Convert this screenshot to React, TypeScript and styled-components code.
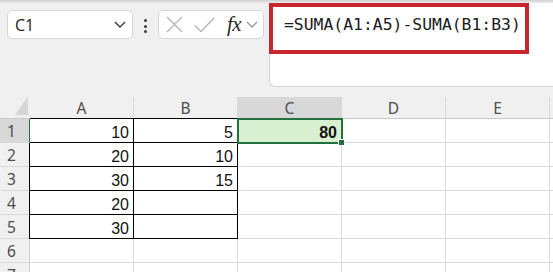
import styled, { createGlobalStyle } from 'styled-components';

const GREEN = '#22703f';
const GRID = '#dadada';

const GlobalStyle = createGlobalStyle`
  html, body {
    margin: 0;
    padding: 0;
    background: #f0f0f0;
    overflow: hidden;
  }
  #root {
    width: 553px;
    height: 272px;
    overflow: hidden;
  }
`;

const rows: (number | string)[][] = [
  [10, 5, 80],
  [20, 10],
  [30, 15],
  [20, ''],
  [30, ''],
  [],
  [],
];

const columns = ['A', 'B', 'C', 'D', 'E', ''];

const Chevron = ({ color }: { color: string }) => (
  <svg width="12" height="7" viewBox="0 0 12 7">
    <path d="M1 1l5 5 5-5" fill="none" stroke={color} strokeWidth="1.4" />
  </svg>
);

export default function App() {
  return (
    <Page>
      <GlobalStyle />
      <TopShade />
      <ToolRow>
        <NameBox>
          <span>C1</span>
          <Chevron color="#3a3a3a" />
        </NameBox>
        <Dots>
          <i />
          <i />
          <i />
        </Dots>
        <FxBox>
          <svg width="17" height="17" viewBox="0 0 17 17">
            <path d="M1 1l15 15M16 1L1 16" stroke="#b4b4b4" strokeWidth="1.3" />
          </svg>
          <svg width="21" height="16" viewBox="0 0 21 16">
            <path d="M1 8.5l6 6L20 1" fill="none" stroke="#b4b4b4" strokeWidth="1.3" />
          </svg>
          <FxLabel>fx</FxLabel>
          <Chevron color="#9a9a9a" />
        </FxBox>
        <FormulaBar>
          <Highlight>=SUMA(A1:A5)-SUMA(B1:B3)</Highlight>
        </FormulaBar>
      </ToolRow>
      <Sheet>
        <Corner>
          <svg width="13" height="19" viewBox="0 0 13 19">
            <path d="M13 0v19H0z" fill="#d6d6d6" />
          </svg>
        </Corner>
        {columns.map((c) => (
          <ColHead key={c || 'F'} $active={c === 'C'}>
            {c}
          </ColHead>
        ))}
        {rows.map((row, r) => (
          <Row key={r} row={row} index={r} />
        ))}
      </Sheet>
    </Page>
  );
}

const Row = ({ row, index }: { row: (number | string)[]; index: number }) => (
  <>
    <RowHead $active={index === 0}>{index + 1}</RowHead>
    {columns.map((_, c) => {
      const boxed = index < 5 && c < 2;
      const selected = index === 0 && c === 2;
      return (
        <Cell
          key={c}
          $boxed={boxed}
          $top={boxed && index === 0}
          $left={boxed && c === 0 && index > 0}
          $selected={selected}
        >
          {row[c]}
          {selected && <Handle />}
        </Cell>
      );
    })}
  </>
);

const Page = styled.div`
  display: flex;
  flex-direction: column;
  height: 272px;
  font-family: 'Liberation Sans', Arial, sans-serif;
`;

const TopShade = styled.div`
  height: 3px;
  background: linear-gradient(#cfcfcf, #ebebeb);
`;

const ToolRow = styled.div`
  display: flex;
  align-items: flex-start;
  height: 94px;
  padding-left: 7px;
`;

const NameBox = styled.div`
  box-sizing: border-box;
  display: flex;
  align-items: center;
  justify-content: space-between;
  width: 126px;
  height: 29px;
  margin-top: 7px;
  padding: 0 6px 0 7px;
  background: #fff;
  border: 1px solid #d6d6d6;
  border-radius: 5px;
  font-family: 'Open Sans', sans-serif;
  font-size: 16px;
  color: #222;
`;

const Dots = styled.div`
  display: flex;
  flex-direction: column;
  gap: 2.5px;
  margin: 16px 11px 0 11px;

  i {
    width: 3px;
    height: 3px;
    border-radius: 50%;
    background: #3c3c3c;
  }
`;

const FxBox = styled.div`
  box-sizing: border-box;
  display: flex;
  align-items: center;
  width: 106px;
  height: 29px;
  margin-top: 7px;
  padding: 0 0 0 7px;
  gap: 11px;
  background: #fff;
  border: 1px solid #d6d6d6;
  border-radius: 5px;
`;

const FxLabel = styled.span`
  margin-left: 1px;
  margin-right: -6px;
  font-family: 'Liberation Serif', serif;
  font-style: italic;
  font-size: 21px;
  color: #2a2a2a;
  letter-spacing: -0.5px;
`;

const FormulaBar = styled.div`
  flex: 1;
  height: 83px;
  margin-left: 5px;
  background: #fff;
  border-left: 1px solid #d4d4d4;
  border-bottom: 1px solid #d4d4d4;
  border-bottom-left-radius: 6px;
`;

const Highlight = styled.div`
  box-sizing: border-box;
  width: 260px;
  height: 51px;
  margin-left: -1px;
  padding: 8px 0 0 11px;
  border: 4px solid #c8262f;
  font-family: 'DejaVu Sans Mono', monospace;
  font-size: 16.4px;
  line-height: 20px;
  color: #1a1a1a;
  white-space: nowrap;
`;

const Sheet = styled.div`
  flex: 1;
  display: grid;
  grid-template-columns: 30px repeat(6, 104px);
  grid-template-rows: 22px;
  grid-auto-rows: 24px;
  overflow: hidden;
  background: #fff;
`;

const Corner = styled.div`
  display: flex;
  align-items: flex-end;
  justify-content: flex-end;
  padding: 0 2px 3px 0;
  background: #f0f0f0;
  border-bottom: 1px solid #c9c9c9;
`;

const ColHead = styled.div<{ $active?: boolean }>`
  box-sizing: border-box;
  display: flex;
  align-items: center;
  justify-content: center;
  background: ${(p) => (p.$active ? '#d8d8d8' : '#f0f0f0')};
  border-right: 1px solid #d9d9d9;
  border-bottom: 1px solid ${(p) => (p.$active ? GREEN : '#c9c9c9')};
  font-family: 'Noto Sans', sans-serif;
  font-size: 15.5px;
  color: #4c4c4c;
`;

const RowHead = styled.div<{ $active?: boolean }>`
  box-sizing: border-box;
  padding: 2px 6px 0 0;
  text-align: center;
  line-height: 21px;
  background: ${(p) => (p.$active ? '#d8d8d8' : '#f0f0f0')};
  border-right: 1px solid ${(p) => (p.$active ? GREEN : '#cfcfcf')};
  border-bottom: 1px solid #d9d9d9;
  font-family: 'Noto Sans', sans-serif;
  font-size: 15.5px;
  color: #4c4c4c;
`;

const Cell = styled.div<{
  $boxed?: boolean;
  $top?: boolean;
  $left?: boolean;
  $selected?: boolean;
}>`
  position: relative;
  box-sizing: border-box;
  padding: 4px 4px 0 0;
  text-align: right;
  font-size: 16px;
  line-height: 19px;
  color: #111;
  border-right: 1px solid ${(p) => (p.$boxed ? '#000' : GRID)};
  border-bottom: 1px solid ${(p) => (p.$boxed ? '#000' : GRID)};
  box-shadow: ${(p) =>
    [p.$top && '0 -1px 0 #000', p.$left && '-1px 0 0 #000']
      .filter(Boolean)
      .join(', ') || 'none'};
  ${(p) =>
    p.$selected &&
    `
    background: #d9efd2;
    font-weight: 700;
    outline: 2px solid ${GREEN};
    outline-offset: -1px;
    z-index: 1;
  `}
`;

const Handle = styled.span`
  position: absolute;
  right: -4px;
  bottom: -4px;
  width: 5px;
  height: 5px;
  background: ${GREEN};
  border: 1px solid #fff;
  z-index: 2;
`;
